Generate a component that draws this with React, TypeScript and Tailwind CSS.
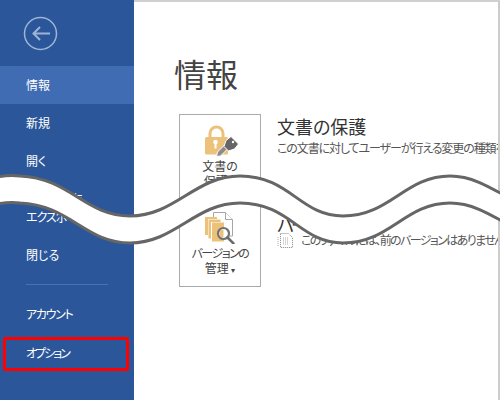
const FONT = "font-['Noto_Sans_CJK_JP','Noto_Sans',sans-serif] [font-feature-settings:'palt']";

function NavItem({ label, active, className = "" }: { label: string; active?: boolean; className?: string }) {
  return (
    <div className={`h-[38px] flex items-center pl-[26px] text-[12px] leading-none text-white ${active ? "bg-[#3f6cb3]" : ""} ${className}`}>
      {label}
    </div>
  );
}

function LockIcon() {
  return (
    <svg width="34" height="32" viewBox="0 0 34 32" className="block">
      <path d="M5 13V8.500a6.500 6.500 0 0 1 13 0V13" fill="none" stroke="#ecc27a" strokeWidth="3" />
      <rect x="0" y="12" width="23" height="17.500" rx="1.500" fill="#ecc27a" />
      <circle cx="10.500" cy="17" r="2.300" fill="#fff" />
      <rect x="9.500" y="17" width="2" height="6.500" fill="#fff" />
      <path d="M11.500 31.500l1-4.500 8-8 3.500 3.500-8.500 8.500z" fill="#8c8c8c" stroke="#fff" strokeWidth="1" />
      <path d="M19 21.500l2-6 5-4 7.500 7.500-4 5-6 2z" fill="#666" stroke="#fff" strokeWidth="1" />
      <circle cx="28" cy="17" r="1.200" fill="#fff" />
    </svg>
  );
}

function VersionIcon() {
  return (
    <svg width="32" height="32" viewBox="0 0 32 32" className="block">
      <path d="M8.500 .5h12L27.500 7.500V24h-19z" fill="#fff" stroke="#a6a6a6" />
      <path d="M20.500 .5v7h7" fill="#fff" stroke="#a6a6a6" />
      <rect x="0" y="5" width="12" height="18" fill="#ecc27a" />
      <rect x="3" y="7" width="12" height="19" fill="#fff" />
      <rect x="3.500" y="7.500" width="12" height="19" fill="#ecc27a" />
      <rect x="6" y="10" width="12" height="19" fill="#fff" />
      <rect x="7" y="10.500" width="12" height="19" fill="#ecc27a" />
      <circle cx="18.500" cy="21.500" r="5.500" fill="#fff" stroke="#737373" strokeWidth="2.200" />
      <path d="M18.500 17.500a4 4 0 0 0 0 8z" fill="#ecc27a" />
      <path d="M22.500 25.500l6 6" stroke="#6b6b6b" strokeWidth="2.500" strokeLinecap="round" />
    </svg>
  );
}

function SmallDoc() {
  return (
    <svg width="16" height="15" viewBox="0 0 16 15" className="block shrink-0">
      <path d="M3.500 .5h8l4 4v10h-12z" fill="none" stroke="#888" strokeDasharray="1 1" />
      <path d="M1 4v10M6 5h6M6 7h6M6 9h6M6 11h6" stroke="#aaa" strokeDasharray="1 1" />
    </svg>
  );
}

function Wave() {
  const top = "M-20 182 C-5 176 10 175 20 176 C70 178 85 216 130 216 C175 216 195 176 240 176 C290 176 300 216 343 216 C390 216 405 176 450 176 C472 176 488 186 520 204";
  const bottom = "M-20 209 C-5 203 10 202 20 203 C70 205 85 243 130 243 C175 243 195 203 240 203 C290 203 300 243 343 243 C390 243 405 203 450 203 C472 203 488 213 520 231";
  const fill = top + " L520 231 C488 213 472 203 450 203 C405 203 390 243 343 243 C300 243 290 203 240 203 C195 203 175 243 130 243 C85 243 70 205 20 203 C10 202 -5 203 -20 209 Z";
  return (
    <svg width="500" height="400" viewBox="0 0 500 400" className="absolute inset-0 pointer-events-none">
      <path d={fill} fill="#fff" />
      <path d={top} fill="none" stroke="#666" strokeWidth="3" />
      <path d={bottom} fill="none" stroke="#666" strokeWidth="3" />
    </svg>
  );
}

export default function App() {
  return (
    <div className={`relative w-[500px] h-[400px] overflow-hidden bg-white flex ${FONT}`}>
      <aside className="w-[134px] h-full shrink-0 bg-[#2b579a] flex flex-col">
        <div className="h-[66px] pl-[23px] pt-[16px]">
          <svg width="35" height="35" viewBox="0 0 35 35" className="block">
            <circle cx="17.500" cy="17.500" r="16" fill="none" stroke="#9db4d6" strokeWidth="1.500" />
            <path d="M27 17.500H11M17 11l-6.500 6.500L17 24" fill="none" stroke="#9db4d6" strokeWidth="2" />
          </svg>
        </div>
        <NavItem label="情報" active />
        <NavItem label="新規" />
        <NavItem label="開く" />
        <NavItem label="上書き保存" className="-mb-[20px] tracking-[-0.5px]" />
        <NavItem label="エクスポート" className="tracking-[-1px]" />
        <NavItem label="閉じる" />
        <div className="mt-[10px] ml-[26px] w-[82px] h-px bg-[#4a72b0]" />
        <NavItem label="アカウント" className="mt-[10px] tracking-[-1.300px]" />
        <div className="mt-[4px] ml-[3px] w-[126px] h-[34px] border-[3px] border-[#ff0000] rounded-[2px] flex items-center pl-[20px] pb-[2px] text-[12px] leading-none text-white tracking-[-2px]">
          オプション
        </div>
      </aside>
      <main className="flex-1 flex flex-col border-t-2 border-t-[#d0d0d0] border-r-2 border-r-[#cccccc] overflow-hidden">
        <h1 className="ml-[40px] mt-[49px] h-[44px] text-[32px] leading-[44px] font-normal text-[#444]">情報</h1>
        <div className="ml-[45px] mt-[19px] flex">
          <div className="w-[82px] h-[173px] shrink-0 border border-[#ababab] flex flex-col items-center">
            <div className="mt-[10px] ml-[4px]"><LockIcon /></div>
            <div className="mt-[1px] text-[12px] leading-[15px] text-[#444] text-center whitespace-nowrap">文書の<br />保護 ▾</div>
            <div className="mt-[24px] ml-[2px]"><VersionIcon /></div>
            <div className="mt-[1px] text-[12px] leading-[15px] text-[#444] text-center whitespace-nowrap tracking-[-1.500px]">バージョンの<br /><span className="tracking-normal">管理 <span className="text-[8px]">▾</span></span></div>
          </div>
          <div className="ml-[16px] flex flex-col whitespace-nowrap">
            <div className="mt-[-1px] text-[18px] leading-[26px] text-[#333]">文書の保護</div>
            <div className="mt-[1px] text-[12px] leading-[16px] text-[#555] tracking-[-1.100px]">この文書に対してユーザーが行える変更の種類を管理します。</div>
            <div className="mt-[55px] text-[18px] leading-[26px] text-[#333] tracking-[-3px]">バージョン</div>
            <div className="mt-[-5px] flex items-center gap-[8px] text-[12px] leading-[16px] text-[#555] tracking-[-1.600px]">
              <SmallDoc />
              このファイルには、前のバージョンはありません。
            </div>
          </div>
        </div>
      </main>
      <Wave />
    </div>
  );
}
